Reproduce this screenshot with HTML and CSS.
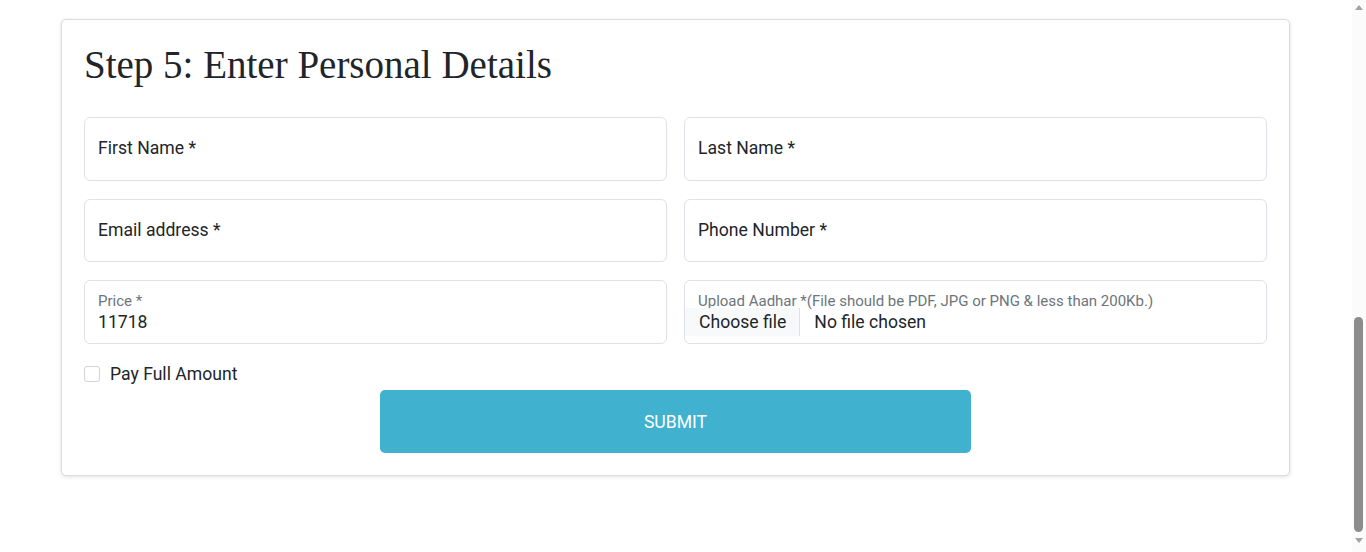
FILE: index.html
```html
<!DOCTYPE html>
<html lang="en">
<head>
<meta charset="utf-8">
<title>Step 5: Enter Personal Details</title>
<link rel="stylesheet" href="styles.css">
</head>
<body>
<main class="page">
  <section class="card">
    <h2 class="title">Step 5: Enter Personal Details</h2>
    <form class="grid">
      <label class="field"><span class="ph">First Name *</span></label>
      <label class="field"><span class="ph">Last Name *</span></label>
      <label class="field"><span class="ph">Email address *</span></label>
      <label class="field"><span class="ph">Phone Number *</span></label>
      <label class="field filled">
        <span class="small">Price *</span>
        <span class="value">11718</span>
      </label>
      <label class="field filled file">
        <span class="small">Upload Aadhar *(File should be PDF, JPG or PNG &amp; less than 200Kb.)</span>
        <span class="file-row"><span class="file-btn">Choose file</span><span class="file-name">No file chosen</span></span>
      </label>
    </form>
    <label class="check"><span class="box"></span><span>Pay Full Amount</span></label>
    <div class="actions"><button class="submit" type="button">SUBMIT</button></div>
  </section>
</main>
<aside class="rail">
  <span class="arrow up"></span>
  <span class="track"><span class="thumb"></span></span>
  <span class="arrow down"></span>
</aside>
</body>
</html>
```
FILE: styles.css
```css
* { box-sizing: border-box; }
html, body { margin: 0; height: 100%; }
body {
  display: flex;
  background: #fff;
  font-family: Roboto, "Liberation Sans", Arial, sans-serif;
  color: #212529;
  overflow: hidden;
}
.page {
  flex: 1;
  padding: 19px 62px 0 61px;
}
.card {
  border: 1px solid #dcdcdc;
  border-radius: 5px;
  box-shadow: 0 1px 4px rgba(0,0,0,0.12);
  padding: 22px;
  background: #fff;
}
.title {
  margin: 0 0 28.3px;
  font-family: "Liberation Serif", "DejaVu Serif", serif;
  font-weight: 400;
  font-size: 39px;
  line-height: 1.2;
  color: #212529;
}
.grid {
  display: grid;
  grid-template-columns: 1fr 1fr;
  column-gap: 17px;
  row-gap: 18px;
  margin: 0;
}
.field {
  height: 63.5px;
  border: 1px solid #dee2e6;
  border-radius: 6px;
  padding: 0 13px;
  display: flex;
  flex-direction: column;
  justify-content: center;
  font-size: 17.6px;
}
.ph { line-height: 1.2; }
.field.filled { justify-content: flex-start; padding-top: 11px; }
.small {
  font-size: 15px;
  line-height: 18px;
  color: #6c757d;
}
.value { font-size: 17.6px; line-height: 24px; margin-top: 0; }
.file { padding-left: 0; }
.file .small { padding-left: 13px; }
.file-row { display: flex; align-items: stretch; height: 28px; margin-top: -2px; font-size: 17.6px; }
.file-btn {
  background: #f8f9fa;
  padding: 0 13px 0 14px;
  border-right: 1px solid #dee2e6;
  display: flex;
  align-items: center;
}
.file-name { display: flex; align-items: center; padding-left: 14px; }
.check {
  display: flex;
  align-items: center;
  gap: 10px;
  margin-top: 18.5px;
  height: 24px;
  font-size: 17.6px;
}
.box {
  width: 16px;
  height: 16px;
  border: 1px solid #d0d4d8;
  border-radius: 3px;
  background: #fff;
}
.actions { display: flex; justify-content: center; margin-top: 4px; }
.submit {
  width: 591px;
  height: 63px;
  border: 0;
  border-radius: 5px;
  background: #40b1cf;
  color: #fff;
  font-family: Roboto, "Liberation Sans", sans-serif;
  font-size: 17.6px;
}
.rail {
  width: 14px;
  background: #fbfbfb;
  display: flex;
  flex-direction: column;
  align-items: center;
  padding: 5px 0 9px;
}
.arrow { width: 0; height: 0; border-left: 4.5px solid transparent; border-right: 4.5px solid transparent; }
.arrow.up { border-bottom: 5px solid #a3a3a3; }
.arrow.down { border-top: 5px solid #a3a3a3; }
.track {
  flex: 1;
  width: 100%;
  display: flex;
  flex-direction: column;
  justify-content: flex-end;
  padding: 0 3px 6px 2px;
}
.thumb { height: 215px; background: #8c8c8c; border-radius: 4.5px; }
```
